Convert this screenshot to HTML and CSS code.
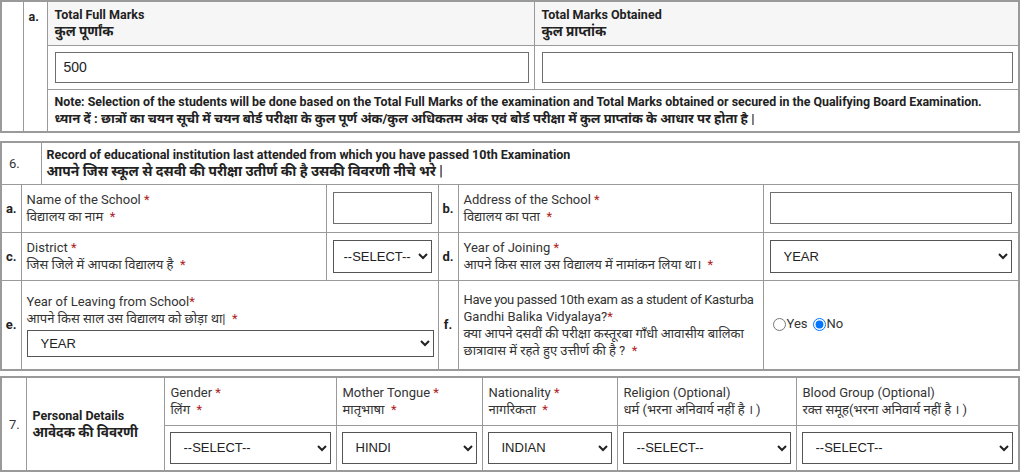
FILE: index.html
```html
<!DOCTYPE html>
<html lang="hi">
<head>
<meta charset="utf-8">
<title>Application Form</title>
<link rel="stylesheet" href="styles.css">
</head>
<body>
<div class="page">

<table class="sec sec5">
  <colgroup><col class="w22"><col class="w24"><col class="w487"><col class="w485"></colgroup>
  <tr class="r5-head">
    <td class="blank" rowspan="3"></td>
    <td class="num5" rowspan="3">a.</td>
    <td class="hd">Total Full Marks<br><span class="hi">कुल पूर्णांक</span></td>
    <td class="hd">Total Marks Obtained<br><span class="hi">कुल प्राप्तांक</span></td>
  </tr>
  <tr class="r5-input">
    <td class="fld5"><input class="txt t5" type="text" value="500"></td>
    <td class="fld5"><input class="txt t5" type="text"></td>
  </tr>
  <tr class="r5-note">
    <td class="note" colspan="2">Note: Selection of the students will be done based on the Total Full Marks of the examination and Total Marks obtained or secured in the Qualifying Board Examination.<br><span class="hi hi-note">ध्यान दें : छात्रों का चयन सूची में चयन बोर्ड परीक्षा के कुल पूर्ण अंक/कुल अधिकतम अंक एवं बोर्ड परीक्षा में कुल प्राप्तांक के आधार पर होता है |</span></td>
  </tr>
</table>

<table class="sec sec6">
  <colgroup><col class="w20"><col class="w20"><col class="w285"><col class="w112"><col class="w20"><col class="w305"><col class="w256"></colgroup>
  <tr class="r6-head">
    <td class="secno" colspan="2">6.</td>
    <td class="sechead" colspan="5">Record of educational institution last attended from which you have passed 10th Examination<br><span class="hi hi-head">आपने जिस स्कूल से दसवी की परीक्षा उतीर्ण की है उसकी विवरणी नीचे भरे |</span></td>
  </tr>
  <tr class="r6-row">
    <td class="let">a.</td>
    <td class="lbl" colspan="2">Name of the School <span class="req">*</span><br>विद्यालय का नाम &nbsp;<span class="req">*</span></td>
    <td class="fld"><input class="txt t6" type="text"></td>
    <td class="let">b.</td>
    <td class="lbl">Address of the School <span class="req">*</span><br>विद्यालय का पता &nbsp;<span class="req">*</span></td>
    <td class="fld"><input class="txt t6" type="text"></td>
  </tr>
  <tr class="r6-row">
    <td class="let">c.</td>
    <td class="lbl" colspan="2">District <span class="req">*</span><br>जिस जिले में आपका विद्यालय है &nbsp;<span class="req">*</span></td>
    <td class="fld"><select class="sel s6 narrow"><option>--SELECT--</option></select></td>
    <td class="let">d.</td>
    <td class="lbl">Year of Joining <span class="req">*</span><br>आपने किस साल उस विद्यालय में नामांकन लिया था। &nbsp;<span class="req">*</span></td>
    <td class="fld"><select class="sel s6"><option>YEAR</option></select></td>
  </tr>
  <tr class="r6-tall">
    <td class="let">e.</td>
    <td class="lbl" colspan="3">Year of Leaving from School<span class="req">*</span><br>आपने किस साल उस विद्यालय को छोड़ा था| &nbsp;<span class="req">*</span>
      <select class="sel s6e"><option>YEAR</option></select></td>
    <td class="let">f.</td>
    <td class="lbl"><span class="nw tight">Have you passed 10th exam as a student of Kasturba</span><br>Gandhi Balika Vidyalaya?<span class="req">*</span><br><span class="nw">क्या आपने दसवीं की परीक्षा कस्तूरबा गाँधी आवासीय बालिका</span><br>छात्रावास में रहते हुए उत्तीर्ण की है ? &nbsp;<span class="req">*</span></td>
    <td class="fld radios"><label class="rad"><input type="radio" name="kgbv">Yes</label><label class="rad"><input type="radio" name="kgbv" checked>No</label></td>
  </tr>
</table>

<table class="sec sec7">
  <colgroup><col class="w25"><col class="w138"><col class="w172"><col class="w146"><col class="w135"><col class="w179"><col class="w223"></colgroup>
  <tr class="r7-head">
    <td class="secno7" rowspan="2">7.</td>
    <td class="pd" rowspan="2">Personal Details<br><span class="hi">आवेदक की विवरणी</span></td>
    <td class="lbl7">Gender <span class="req">*</span><br>लिंग &nbsp;<span class="req">*</span></td>
    <td class="lbl7">Mother Tongue <span class="req">*</span><br>मातृभाषा &nbsp;<span class="req">*</span></td>
    <td class="lbl7">Nationality <span class="req">*</span><br>नागरिकता &nbsp;<span class="req">*</span></td>
    <td class="lbl7">Religion (Optional)<br>धर्म (भरना अनिवार्य नहीं है । )</td>
    <td class="lbl7">Blood Group (Optional)<br>रक्त समूह(भरना अनिवार्य नहीं है । )</td>
  </tr>
  <tr class="r7-sel">
    <td class="fld7"><select class="sel s7"><option>--SELECT--</option></select></td>
    <td class="fld7"><select class="sel s7"><option>HINDI</option></select></td>
    <td class="fld7"><select class="sel s7"><option>INDIAN</option></select></td>
    <td class="fld7"><select class="sel s7"><option>--SELECT--</option></select></td>
    <td class="fld7"><select class="sel s7"><option>--SELECT--</option></select></td>
  </tr>
</table>

</div>
</body>
</html>
```

FILE: styles.css
```css
* { box-sizing: border-box; }

body {
  margin: 0;
  background: #fff;
  color: #333;
  font-family: Roboto, "Noto Sans", "Noto Sans Devanagari", sans-serif;
  font-size: 13px;
  line-height: 17px;
}

.page { width: 1018px; }

table.sec {
  width: 1018px;
  border-collapse: collapse;
  table-layout: fixed;
  border: 2px solid #9a9a9a;
}

table.sec td {
  border: 1px solid #9a9a9a;
  padding: 0 6px;
  vertical-align: middle;
  text-align: left;
}

/* column widths */
.w20 { width: 20px; }
.w22 { width: 22px; }
.w24 { width: 24px; }
.w25 { width: 25px; }
.w112 { width: 112px; }
.w135 { width: 135px; }
.w138 { width: 138px; }
.w146 { width: 146px; }
.w172 { width: 172px; }
.w179 { width: 179px; }
.w223 { width: 223px; }
.w256 { width: 256px; }
.w285 { width: 285px; }
.w305 { width: 305px; }
.w485 { width: 485px; }
.w487 { width: 487px; }

.hi { font-size: 13.5px; }
.hi-note { font-size: 13.1px; }
.hi-head { font-size: 13.8px; }

/* section 5 */
.sec5 { border-top: none; }
.sec5 td.blank { border-top: none; }
.r5-head { height: 44px; }
.r5-input { height: 44px; }
.r5-note { height: 43px; }
.num5 {
  vertical-align: top !important;
  padding: 6px 0 0 5px !important;
  font-weight: 700;
  font-size: 12.5px;
  color: #222;
}
.hd {
  background: #f6f6f6;
  font-weight: 700;
  font-size: 12.5px;
  line-height: 16px;
  color: #222;
  padding: 0 5px 0 7px !important;
}
.fld5 { padding: 0 5px 0 7px !important; }
.note {
  font-weight: 700;
  font-size: 12.4px;
  color: #222;
  padding: 0 7px !important;
}

/* inputs */
.txt {
  display: block;
  width: 100%;
  height: 32px;
  margin: 0;
  padding: 0 8px;
  border: 1px solid #6e6e6e;
  border-radius: 0;
  background: #fff;
  font-family: "Liberation Sans", Arial, sans-serif;
  font-size: 14px;
  color: #222;
}
.t5 { height: 31px; }

.sel {
  display: block;
  width: 100%;
  margin: 0;
  padding: 0 4px 0 9px;
  border: 1px solid #555;
  border-radius: 0;
  background-color: #fff;
  font-family: "Liberation Sans", Arial, sans-serif;
  font-size: 13px;
  color: #222;
}
.s6 { height: 33px; }
.s6.narrow { padding-left: 6px; padding-right: 2px; }
.s6e { height: 27px; margin-top: 3px; }
.s7 { height: 32px; }

/* section 6 */
.sec6 { margin-top: 8px; }
.r6-head { height: 42px; }
.r6-row { height: 48px; }
.r6-tall { height: 90px; }
.secno { padding-left: 7px !important; }
.sechead {
  font-weight: 700;
  font-size: 12.5px;
  line-height: 16px;
  color: #222;
  padding-left: 5px !important;
}
.let {
  padding: 0 !important;
  text-align: center !important;
  font-weight: 700;
  color: #222;
}
.lbl { padding: 0 4px 0 5px !important; }
.nw { white-space: nowrap; }
.tight { letter-spacing: -0.35px; }
.req { color: #b01c1c; }

.radios { padding-left: 4px !important; }
.rad { display: inline-flex; align-items: center; color: #333; }
.rad input { margin: 2px 1px 0 5px; width: 13px; height: 13px; }

/* section 7 */
.sec7 { margin-top: 5px; }
.r7-head { height: 48px; }
.r7-sel { height: 46px; }
.secno7 { padding-left: 7px !important; }
.pd {
  font-weight: 700;
  font-size: 12.5px;
  line-height: 17px;
  color: #222;
}
.lbl7 { padding: 0 6px !important; }
.fld7 { padding: 0 5px !important; }
```
